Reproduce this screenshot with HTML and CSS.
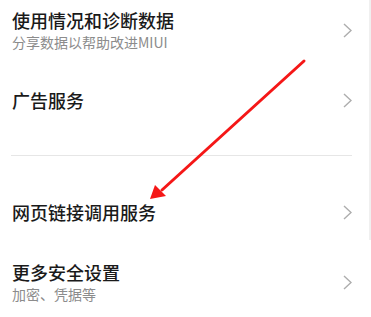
FILE: index.html
```html
<!DOCTYPE html>
<html lang="zh-CN">
<head>
    <meta charset="UTF-8">
    <meta name="viewport" content="width=device-width, initial-scale=1.0">
    <title>隐私设置</title>
    <link rel="stylesheet" href="styles.css">
</head>
<body>
    <div class="settings-page">
        <div class="settings-list">
            <div class="setting-item">
                <div class="setting-text">
                    <div class="setting-title">使用情况和诊断数据</div>
                    <div class="setting-summary">分享数据以帮助改进MIUI</div>
                </div>
                <svg class="setting-arrow" width="9" height="15" viewBox="0 0 9 15"><polyline points="1,1 8,7.5 1,14"/></svg>
            </div>
            <div class="setting-item">
                <div class="setting-text">
                    <div class="setting-title">广告服务</div>
                </div>
                <svg class="setting-arrow" width="9" height="15" viewBox="0 0 9 15"><polyline points="1,1 8,7.5 1,14"/></svg>
            </div>

            <div class="group-divider"></div>

            <div class="setting-item">
                <div class="setting-text">
                    <div class="setting-title">网页链接调用服务</div>
                </div>
                <svg class="setting-arrow" width="9" height="15" viewBox="0 0 9 15"><polyline points="1,1 8,7.5 1,14"/></svg>
            </div>
            <div class="setting-item">
                <div class="setting-text">
                    <div class="setting-title">更多安全设置</div>
                    <div class="setting-summary">加密、凭据等</div>
                </div>
                <svg class="setting-arrow" width="9" height="15" viewBox="0 0 9 15"><polyline points="1,1 8,7.5 1,14"/></svg>
            </div>
        </div>

        <!-- scroll indicator on the right edge -->
        <div class="scroll-thumb"></div>

        <!-- red annotation arrow drawn over the list -->
        <svg class="annotation" width="371" height="317" viewBox="0 0 371 317">
            <line x1="304" y1="61" x2="162" y2="190"/>
            <polygon points="150,199 155,185 166,196"/>
        </svg>
    </div>
</body>
</html>
```

FILE: styles.css
```css
* {
    box-sizing: border-box;
    margin: 0;
    padding: 0;
}

body {
    background: #fff;
    font-family: "Noto Sans CJK SC", "Noto Sans", sans-serif;
    overflow: hidden;
}

.settings-page {
    position: relative;
    width: 371px;
    height: 317px;
    overflow: hidden;
}

.settings-list {
    margin-top: -5px;
}

.setting-item {
    display: flex;
    align-items: center;
    height: 70px;
    padding: 0 19px 0 12px;
}

.setting-text {
    flex: 1;
}

.setting-title {
    font-size: 18px;
    line-height: 24px;
    font-weight: 500;
    color: #1a1a1a;
}

.setting-summary {
    font-size: 14px;
    line-height: 20px;
    color: #8c8c8c;
}

.setting-arrow {
    flex: none;
    display: block;
}

.setting-arrow polyline {
    fill: none;
    stroke: #adadad;
    stroke-width: 1.4;
}

.group-divider {
    height: 1px;
    margin: 20px 19px 21px 11px;
    background: #e6e6e6;
}

/* Overlays */
.scroll-thumb {
    position: absolute;
    top: 0;
    right: 0;
    width: 2px;
    height: 240px;
    background: #f0f0f0;
}

.annotation {
    position: absolute;
    top: 0;
    left: 0;
}

.annotation line {
    stroke: #f51717;
    stroke-width: 3;
    stroke-linecap: round;
}

.annotation polygon {
    fill: #f51717;
}
```
